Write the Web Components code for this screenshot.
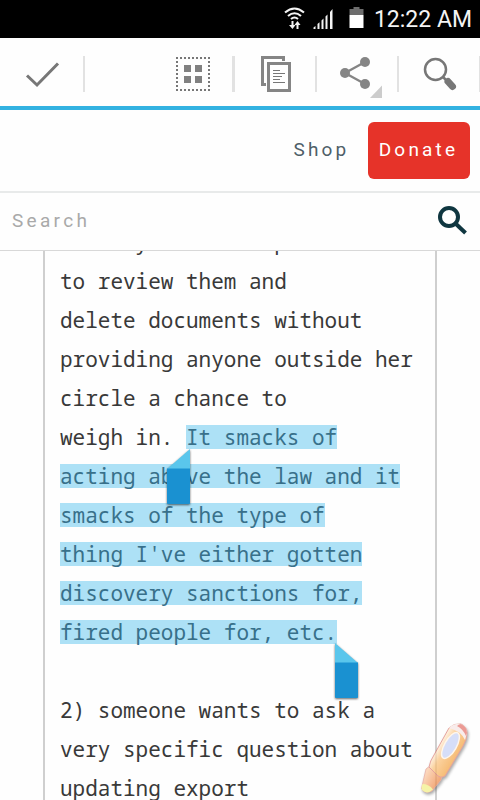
<!DOCTYPE html>
<html lang="en">
<head>
<meta charset="utf-8">
<title>Mail archive</title>
<style>
    html, body {
        margin: 0;
        height: 100%;
        overflow: hidden;
        background: #fff;
        font-family: Roboto, sans-serif;
    }
</style>
</head>
<body>
<phone-screen>
    <status-bar slot="status">12:22 AM</status-bar>
    <selection-toolbar slot="toolbar"></selection-toolbar>
    <site-header slot="header">
        <span slot="link">Shop</span>
        <span slot="button">Donate</span>
    </site-header>
    <search-field slot="search">Search</search-field>
    <mail-text></mail-text>
    <pen-badge slot="overlay"></pen-badge>
</phone-screen>

<script>
// defineElement() {{{1

// Registers a custom element whose shadow root is cloned from the given markup
function defineElement(name, html) {
    const templateEl = document.createElement('template');
    templateEl.innerHTML = html;
    customElements.define(name, class extends HTMLElement {
        constructor() {
            super();
            this.attachShadow({ mode: 'open' });
            this.shadowRoot.appendChild(templateEl.content.cloneNode(true));
        }
    });
}

// phone-screen {{{1

defineElement('phone-screen', `
    <style>
    :host {
        display: grid;
        grid-template-rows: 38px 72px 83px 58px 1fr;
        width: 480px;
        height: 800px;
        position: relative;
        overflow: hidden;
        background: #fefefe;
    }
    main { overflow: hidden; }
    </style>
    <slot name="status"></slot>
    <slot name="toolbar"></slot>
    <slot name="header"></slot>
    <slot name="search"></slot>
    <main><slot></slot></main>
    <slot name="overlay"></slot>
`);

// status-bar {{{1

defineElement('status-bar', `
    <style>
    :host {
        display: flex;
        align-items: center;
        justify-content: flex-end;
        gap: 10px;
        padding-right: 8px;
        box-sizing: border-box;
        background: #000;
        color: #f4f4f4;
        font-size: 23px;
        line-height: 38px;
        white-space: nowrap;
    }
    svg { display: block; flex: none; }
    .time { padding-top: 2px; }
    </style>
    <svg width="82" height="38" viewBox="281.500 0 82 38">
        <g fill="none" stroke="#f4f4f4" stroke-width="2.1">
            <path d="M284.5 12.5Q294 4.500 303.500 12.500"/>
            <path d="M287.500 16Q294 10.500 300.500 16"/>
            <path d="M290.500 19Q294 16 297.500 19"/>
        </g>
        <path fill="#f4f4f4" d="M291 21h2v4h2l-3 4-3.500-4h2.500zM296 29v-4h-2l3-4 3 4h-2v4z"/>
        <path fill="#f4f4f4" d="M313 29v-1.500l2-1.500v3zM317 29v-5l2-1.700V29zM321 29v-8.500l2-2V29zM325 29V16.500l2-2V29zM329.500 29V12l2.500-3v20z"/>
        <path fill="#6d6d6d" d="M349 15V9h4V7h6v2h4v6z"/>
        <path fill="#fff" d="M349 15h14v13h-14z"/>
    </svg>
    <span class="time"><slot></slot></span>
`);

// selection-toolbar {{{1

defineElement('selection-toolbar', `
    <style>
    :host {
        display: grid;
        grid-template-columns: 85px 67px 83px 82px 82px 81px;
        box-sizing: border-box;
        border-bottom: 4px solid #33b2e1;
        background: #fefefe;
    }
    .cell {
        display: flex;
        background: linear-gradient(#e2e2e2, #e2e2e2) no-repeat right 18px / 2px 36px;
    }
    .cell.wide { background-size: 3px 36px; }
    .cell.last { background-size: 1px 36px; }
    svg { display: block; }
    </style>
    <div class="cell">
        <svg width="85" height="68" viewBox="0 38 85 68">
            <path d="M27 75.500L37 85L58 63.500" fill="none" stroke="#777" stroke-width="3"/>
        </svg>
    </div>
    <div></div>
    <div class="cell wide">
        <svg width="83" height="68" viewBox="152 38 83 68">
            <path d="M176 58H210M176 90H210" stroke="#777" stroke-width="2" stroke-dasharray="2"/>
            <path d="M177 61V90M209 61V90" stroke="#777" stroke-width="2" stroke-dasharray="2"/>
            <path d="M184 65h7v7h-7zM195 65h7v7h-7zM184 76h7v7h-7zM195 76h7v7h-7z" fill="#808080"/>
        </svg>
    </div>
    <div class="cell">
        <svg width="82" height="68" viewBox="235 38 82 68">
            <path d="M285 61V56H261V86H266V83H264V59H282V61z" fill="#858585"/>
            <rect x="268.500" y="63.500" width="21" height="27" fill="#fefefe" stroke="#858585" stroke-width="3"/>
            <path d="M273 70.500h7M273 73.500h12M273 76.500h9M273 79.500h7M273 82.500h12" stroke="#777"/>
        </svg>
    </div>
    <div class="cell">
        <svg width="82" height="68" viewBox="317 38 82 68">
            <path d="M365 62L345 73L365 84" fill="none" stroke="#858585" stroke-width="2.300"/>
            <circle cx="345" cy="73" r="5" fill="#858585"/>
            <circle cx="365" cy="62" r="5" fill="#858585"/>
            <circle cx="365" cy="84" r="5" fill="#858585"/>
            <path d="M382 85.500V98H370z" fill="#ccc"/>
        </svg>
    </div>
    <div class="cell last">
        <svg width="81" height="68" viewBox="399 38 81 68">
            <circle cx="435.500" cy="69.500" r="10.500" fill="none" stroke="#777" stroke-width="2.500"/>
            <path d="M443 77L447 81" stroke="#777" stroke-width="2.500"/>
            <path d="M448 81.500L452.500 86.500" stroke="#777" stroke-width="7" stroke-linecap="round"/>
        </svg>
    </div>
`);

// site-header {{{1

defineElement('site-header', `
    <style>
    :host {
        display: flex;
        align-items: center;
        justify-content: flex-end;
        gap: 18px;
        padding-right: 10.500px;
        box-sizing: border-box;
        border-bottom: 2px solid #e8eaea;
        background: #fefefe;
        color: #4f5f68;
        font-size: 19px;
        letter-spacing: 3.2px;
    }
    .link, .label { padding-bottom: 2px; }
    .button {
        display: flex;
        align-items: center;
        justify-content: center;
        width: 102px;
        height: 57px;
        box-sizing: border-box;
        border-radius: 6px;
        background: #e63329;
        color: #fff;
    }
    </style>
    <div class="link"><slot name="link"></slot></div>
    <div class="button"><div class="label"><slot name="button"></slot></div></div>
`);

// search-field {{{1

defineElement('search-field', `
    <style>
    :host {
        display: flex;
        align-items: center;
        justify-content: space-between;
        padding: 0 12px;
        box-sizing: border-box;
        border-bottom: 1px solid #d8d8d8;
        background: #fefefe;
        color: #a9a9a9;
        font-size: 19px;
        letter-spacing: 3.3px;
    }
    .text { padding-bottom: 2px; }
    svg { display: block; margin-bottom: 2px; }
    </style>
    <span class="text"><slot></slot></span>
    <svg width="30" height="30" viewBox="438 206 30 30">
        <circle cx="449" cy="217" r="9" fill="none" stroke="#0f3640" stroke-width="4"/>
        <path d="M455.500 223.500L465.500 233" stroke="#0f3640" stroke-width="4"/>
    </svg>
`);

// selection-handle {{{1

defineElement('selection-handle', `
    <style>
    :host {
        display: block;
        position: absolute;
        width: 27px;
        height: 60px;
    }
    :host([side="start"]) svg { transform: scaleX(-1); }
    svg { display: block; filter: drop-shadow(0 1.500px 1px #0009); }
    </style>
    <svg width="27" height="60" viewBox="0 0 27 60">
        <path d="M2 1L25 21H2z" fill="#5ac6ec"/>
        <path d="M2 20.500H25V55Q25 56 24 56H3Q2 56 2 55z" fill="#1a91d1"/>
    </svg>
`);

// mail-text {{{1

// Lines of the message as [plain part, selected part]
const MAIL_LINES = [
    ['history and then plan'],
    ['to review them and'],
    ['delete documents without'],
    ['providing anyone outside her'],
    ['circle a chance to'],
    ['weigh in. ', 'It smacks of'],
    ['', 'acting above the law and it'],
    ['', 'smacks of the type of'],
    ['', "thing I've either gotten"],
    ['', 'discovery sanctions for,'],
    ['', 'fired people for, etc.'],
    [''],
    ['2) someone wants to ask a'],
    ['very specific question about'],
    ['updating export'],
];

function mailLinesHTML() {
    return MAIL_LINES.map(([plain, selected]) =>
        `<div class="line">${plain}${selected ? `<mark>${selected}</mark>` : ''}</div>`
    ).join('');
}

defineElement('mail-text', `
    <style>
    :host {
        display: flow-root;
        position: relative;
        width: 394px;
        height: 560px;
        margin-left: 43px;
        padding-left: 15px;
        box-sizing: border-box;
        border: solid #cfcfcf;
        border-width: 0 2px;
        color: #393939;
        font-family: "Droid Sans Mono", "Noto Sans Mono", "DejaVu Sans Mono", monospace;
        font-size: 21px;
        line-height: 39px;
    }
    .lines { margin-top: -28px; }
    .line { height: 39px; white-space: pre; }
    mark {
        background: linear-gradient(#ade1f6, #ade1f6) no-repeat 0 50% / 100% 24px;
        color: #38708a;
    }
    selection-handle[side="start"] { left: 120px; top: 197px; }
    selection-handle[side="end"] { left: 288px; top: 391px; }
    </style>
    <div class="lines">${mailLinesHTML()}</div>
    <selection-handle side="start"></selection-handle>
    <selection-handle side="end"></selection-handle>
`);

// pen-badge {{{1

defineElement('pen-badge', `
    <style>
    :host {
        display: block;
        position: absolute;
        left: 412px;
        top: 716px;
        opacity: 0.72;
    }
    svg { display: block; filter: drop-shadow(1.500px 2px 1.500px #0007); }
    </style>
    <svg width="64" height="84" viewBox="412 716 64 84">
        <defs>
            <linearGradient id="barrel" gradientUnits="userSpaceOnUse" x1="438" y1="745" x2="458" y2="757">
                <stop offset="0" stop-color="#fff3e4"/>
                <stop offset="0.350" stop-color="#fbc27c"/>
                <stop offset="1" stop-color="#f3a03c"/>
            </linearGradient>
            <linearGradient id="tip" gradientUnits="userSpaceOnUse" x1="424" y1="776" x2="438" y2="784">
                <stop offset="0" stop-color="#fbc9a4"/>
                <stop offset="1" stop-color="#ee8844"/>
            </linearGradient>
        </defs>
        <path d="M431 768L442 776L441 780L432 791Q425 794.500 421.500 788.500L426 769Q428 766 431 768z" fill="url(#tip)" stroke="#e09488" stroke-width="0.800"/>
        <path d="M429 767Q430 761 434 755L449 728Q454 723 461 724Q467 727 467 733Q467 739 463 746L445 776Q440 779 436 774z" fill="url(#barrel)" stroke="#dc8179"/>
        <path d="M449 728Q454 723 461 724Q467 727 467 733L465 740Q461 731 449 728z" fill="#f7e6e4"/>
        <path d="M457 726Q459 724 461 724Q467 727 467 733L466 736Q463 729 457 726z" fill="#e4746c"/>
        <ellipse cx="450.500" cy="745.500" rx="6" ry="14.500" transform="rotate(30 450.500 745.500)" fill="#c8d2f6" stroke="#fff3e4" stroke-width="1.500"/>
        <path d="M422.500 784Q429 784 433 789.500Q427 795 422 790Q421 787 422.500 784z" fill="#f2ef86"/>
    </svg>
`);

// }}}
</script>
</body>
</html>
